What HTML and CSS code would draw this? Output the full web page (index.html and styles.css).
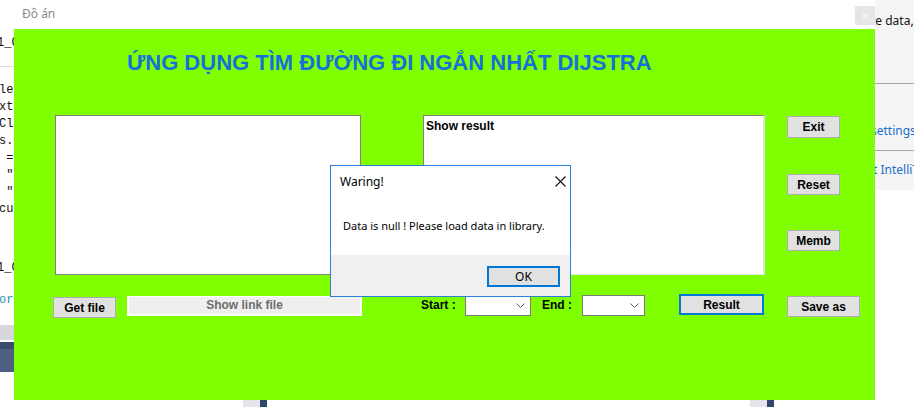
FILE: index.html
```html
<!DOCTYPE html>
<html lang="vi">
<head>
<meta charset="utf-8">
<title>Đồ án</title>
<link rel="stylesheet" href="styles.css">
</head>
<body>
<div class="desk">
  <div class="ide-title">Đồ án</div>
  <div class="ide-close">x</div>

  <div class="code-pane">
    <div class="code-top"><span class="ln cut">1_C</span></div>
    <div class="code-body">
      <span class="ln">lea</span>
      <span class="ln">xt</span>
      <span class="ln">Cle</span>
      <span class="ln">s.C</span>
      <span class="ln">&nbsp;=</span>
      <span class="ln">&nbsp;"</span>
      <span class="ln">&nbsp;"<span class="str">s</span></span>
      <span class="ln">cus</span>
    </div>
    <div class="code-mid">
      <span class="ln cut">1_C</span>
      <span class="ln teal">orm</span>
    </div>
    <div class="code-bars">
      <div class="bar-gray"></div>
      <div class="bar-navy"></div>
    </div>
  </div>

  <div class="side-panel">
    <div class="sp-row sp-top">te data,</div>
    <div class="sp-row sp-link sp-sep">settings</div>
    <div class="sp-row sp-link sp-sep sp-last">t IntelliT</div>
  </div>

  <div class="scroll-bit left"><i></i></div>
  <div class="scroll-bit right"><i></i></div>

  <div class="form">
    <h1 class="title">ỨNG DỤNG TÌM ĐƯỜNG ĐI NGẮN NHẤT DIJSTRA</h1>
    <div class="main">
      <div class="box in-box"></div>
      <div class="box out-box">Show result</div>
      <div class="side-btns">
        <button class="btn b-exit">Exit</button>
        <button class="btn b-reset">Reset</button>
        <button class="btn b-memb">Memb</button>
      </div>
    </div>
    <div class="bottom">
      <button class="btn b-get">Get file</button>
      <div class="link-box">Show link file</div>
      <span class="lbl l-start">Start :</span>
      <div class="combo c1"><svg width="9" height="5" viewBox="0 0 9 5"><path d="M0.5 0.5 L4.5 4.5 L8.5 0.5" fill="none" stroke="#555" stroke-width="1"/></svg></div>
      <span class="lbl l-end">End :</span>
      <div class="combo c2"><svg width="9" height="5" viewBox="0 0 9 5"><path d="M0.5 0.5 L4.5 4.5 L8.5 0.5" fill="none" stroke="#555" stroke-width="1"/></svg></div>
      <button class="btn b-result">Result</button>
      <button class="btn b-save">Save as</button>
    </div>
  </div>

  <div class="dialog">
    <div class="dlg-head">
      <span class="dlg-title">Waring!</span>
      <svg class="dlg-x" width="11" height="11" viewBox="0 0 11 11"><path d="M0.5 0.5 L10.5 10.5 M10.5 0.5 L0.5 10.5" stroke="#111" stroke-width="1.1" fill="none"/></svg>
    </div>
    <div class="dlg-body">Data is null ! Please load data in library.</div>
    <div class="dlg-foot"><button class="ok">OK</button></div>
  </div>
</div>
</body>
</html>
```

FILE: styles.css
```css
* { box-sizing: border-box; }
html, body { margin: 0; padding: 0; }
body {
  width: 914px;
  height: 407px;
  overflow: hidden;
  background: #fff;
  font-family: "Liberation Sans", Arial, sans-serif;
}
.desk { position: relative; width: 914px; height: 407px; overflow: hidden; }

.ide-title {
  position: absolute; left: 22px; top: 5px;
  font-family: "Noto Sans", sans-serif; font-size: 12px; color: #8a8a8a;
}
.ide-close {
  position: absolute; left: 855px; top: 6px; width: 20px; height: 19px;
  background: #e6e6e6; color: #fff; font-size: 11px; text-align: center; line-height: 17px;
  font-family: "Noto Sans", sans-serif; z-index: 2;
}

/* code pane on the left */
.code-pane {
  position: absolute; left: 0; top: 29px; width: 14px; height: 378px; overflow: hidden;
  font-family: "Liberation Mono", monospace; font-size: 12px; color: #111;
}
.ln { display: block; height: 17px; line-height: 17px; white-space: pre; margin-left: -1px; }
.cut { margin-left: -3px; }
.code-top { height: 38px; padding-top: 6px; border-bottom: 1px solid #dcdcdc; }
.code-body { padding-top: 15px; }
.str { color: #a31515; }
.code-mid { padding-top: 42px; }
.teal { color: #2b91af; margin-top: 15px; }
.code-bars { padding-top: 16px; }
.bar-gray { height: 15px; background: #d7d7dd; }
.bar-navy { height: 30px; margin-top: 2px; background: #4d5f82; border-top: 7px solid #3a4c70; }

/* right panel */
.side-panel {
  position: absolute; left: 875px; top: 0; width: 39px; height: 190px;
  background: #f5f5f5; font-family: "Noto Sans", sans-serif; font-size: 12px; color: #111;
  overflow: hidden; white-space: nowrap;
}
.sp-row { margin-left: -4px; }
.sp-top { height: 83px; padding-top: 12px; }
.sp-sep { border-top: 1px solid #a6a6a6; }
.sp-link { color: #1a6fc9; height: 67px; padding-top: 38px; }
.sp-last { height: 40px; padding-top: 10px; margin-left: -2px; }

.scroll-bit { position: absolute; top: 400px; height: 7px; width: 24px; background: #e4e4ea; }
.scroll-bit i { position: absolute; right: 0; top: 0; width: 7px; height: 7px; background: #2e466c; }
.scroll-bit.left { left: 243px; }
.scroll-bit.right { left: 750px; }

/* main form window */
.form {
  position: absolute; left: 14px; top: 29px; width: 861px; height: 371px;
  background: #7fff00; z-index: 1;
}
.title {
  margin: 22px 0 0 113px; height: 24px; line-height: 24px;
  font-size: 22px; font-weight: bold; color: #1670dc; white-space: nowrap;
}
.main { display: flex; align-items: flex-start; margin-top: 40px; padding-left: 41px; }
.box { height: 160px; background: #fff; }
.in-box { width: 306px; border: 1px solid #7f7f7f; }
.out-box {
  width: 342px; margin-left: 62px;
  border-top: 1px solid #808080; border-left: 1px solid #808080;
  border-right: 2px solid #e3e3e3; border-bottom: 1px solid #e3e3e3;
  font-size: 12px; font-weight: bold; color: #000; padding: 3px 2px;
}
.side-btns { display: flex; flex-direction: column; margin-left: 22px; padding-top: 1px; }

.btn {
  font-family: "Liberation Sans", Arial, sans-serif; font-size: 12px; font-weight: bold; color: #000;
  background: #e1e1e1; border: 1px solid #adadad; padding: 0; margin: 0; height: 21px;
}
.b-exit { width: 53px; height: 22px; }
.b-reset { width: 53px; margin-top: 36px; }
.b-memb { width: 53px; margin-top: 35px; }

.bottom { display: flex; align-items: flex-start; margin-top: 19px; padding-left: 39px; }
.b-get { width: 63px; margin-top: 3px; }
.link-box {
  width: 235px; height: 20px; margin-left: 11px; margin-top: 2px;
  background: #efefef; border: 2px solid #fff; border-top-width: 1px;
  color: #6d6d6d; font-size: 12px; font-weight: bold; text-align: center; line-height: 17px;
}
.lbl { font-size: 12px; font-weight: bold; color: #000; margin-top: 4px; white-space: pre; }
.l-start { width: 44px; margin-left: 59px; }
.l-end { width: 40px; margin-left: 11px; }
.combo {
  height: 21px; margin-top: 1px; background: #fff; border: 1px solid #7a7a7a;
  display: flex; align-items: center; justify-content: flex-end; padding-right: 5px;
}
.c1 { width: 66px; }
.c2 { width: 63px; }
.b-result { width: 85px; margin-left: 34px; border: 2px solid #0078d7; }
.b-save { width: 73px; margin-left: 23px; margin-top: 2px; }

/* message box */
.dialog {
  position: absolute; left: 330px; top: 165px; width: 241px; height: 132px;
  background: #fff; border: 1px solid #2a84d6; z-index: 3;
  display: flex; flex-direction: column;
  font-family: "Noto Sans", sans-serif; font-size: 11px; color: #000;
}
.dlg-head { height: 31px; display: flex; align-items: center; justify-content: space-between; padding: 0 4px 0 9px; }
.dlg-title { font-size: 12px; }
.dlg-x { margin-right: 0; }
.dlg-body { height: 58px; line-height: 58px; padding-left: 12px; white-space: nowrap; }
.dlg-foot { flex: 1; background: #f0f0f0; display: flex; justify-content: flex-end; align-items: flex-start; padding: 11px 10px 0 0; }
.ok {
  width: 73px; height: 21px; background: #e1e1e1; border: 2px solid #0078d7; padding: 0;
  font-family: "Noto Sans", sans-serif; font-size: 12px; color: #000; line-height: 16px;
}
```
